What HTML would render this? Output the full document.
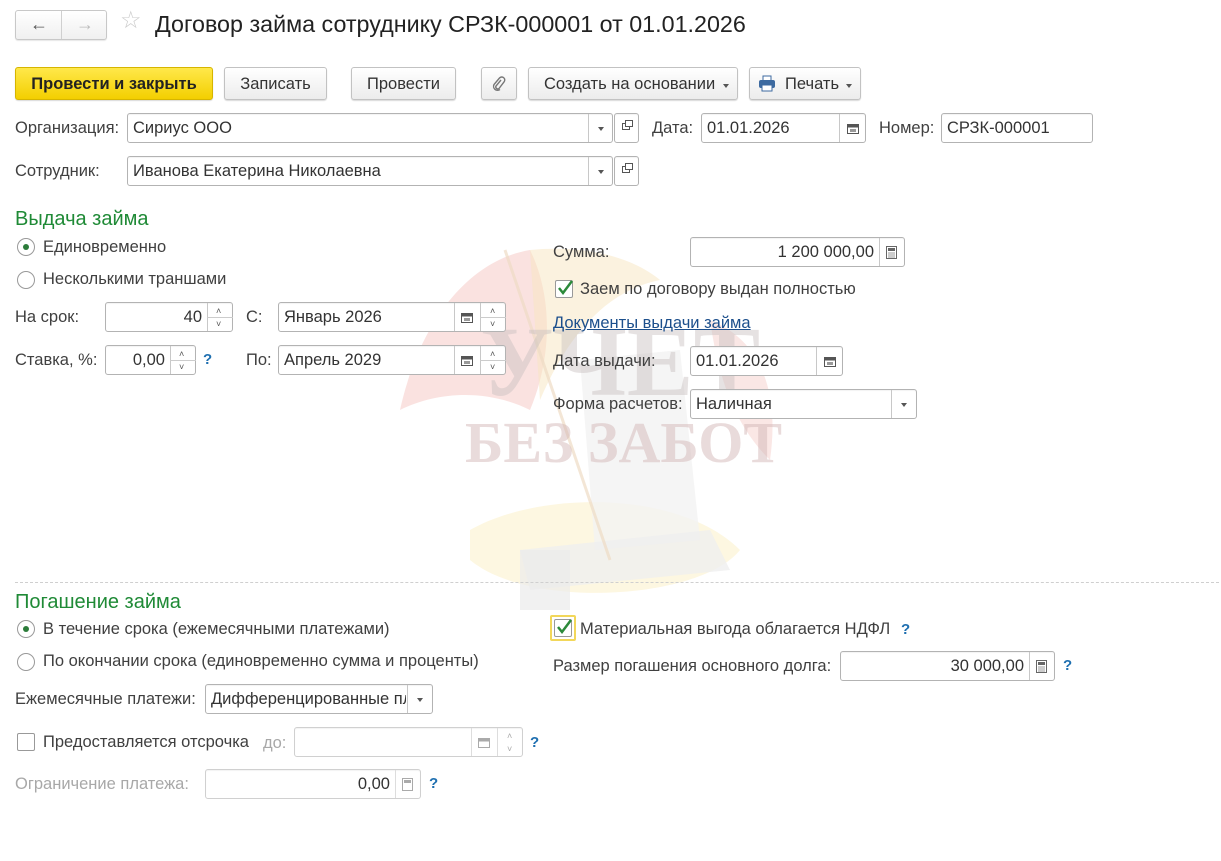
<!DOCTYPE html>
<html><head><meta charset="utf-8">
<style>
*{box-sizing:border-box;margin:0;padding:0}
body{width:1221px;height:861px;background:#fff;font-family:"Liberation Sans",Arial,sans-serif;font-size:16.5px;color:#404040;position:relative;overflow:hidden}
.a{position:absolute}
.t{position:absolute;white-space:nowrap;line-height:18px}
.inp{position:absolute;border:1px solid #b3b3b3;border-radius:3px;background:#fff;box-shadow:inset 0 1px 1px rgba(0,0,0,.05)}
.inp .v{position:absolute;top:0;left:5px;color:#333;white-space:nowrap;line-height:28px}
.inp .r{position:absolute;top:0;right:5px;color:#333;line-height:28px}
.sep{position:absolute;top:0;bottom:0;border-left:1px solid #c8c8c8}
.btn{position:absolute;border:1px solid #c2c2c2;border-radius:3px;background:linear-gradient(#fff,#ececec);box-shadow:0 1px 1px rgba(0,0,0,.15);text-align:center;line-height:32px;color:#333;white-space:nowrap}
.dd{position:absolute;width:0;height:0;border-left:3px solid transparent;border-right:3px solid transparent;border-top:4px solid #555}
.radio{position:absolute;width:18px;height:18px;border:1px solid #999;border-radius:50%;background:#fff}
.radio.on:after{content:"";position:absolute;left:5px;top:5px;width:6px;height:6px;border-radius:50%;background:#2c7c3a}
.chk{position:absolute;width:18px;height:18px;border:1px solid #999;border-radius:2px;background:#fff}
.q{position:absolute;color:#1e6fb0;font-weight:bold;font-size:15px}
.green{position:absolute;color:#1f8a36;font-size:20px;white-space:nowrap}
.gray{color:#a8a8a8}
.sp{position:absolute;font-size:9px;color:#555;line-height:10px}
</style></head><body>

<!-- watermark -->
<svg class="a" style="left:380px;top:230px" width="460" height="380" viewBox="0 0 460 380">
 <path d="M20 180 C40 90 90 30 150 20 C170 60 175 120 150 180 C110 160 60 160 20 180Z" fill="#f6cfcc" opacity=".6"/>
 <path d="M150 20 C200 15 250 25 280 50 C230 60 190 100 160 170Z" fill="#f8e6c0" opacity=".5"/>
 <path d="M330 90 C380 110 400 160 390 230 C360 200 340 160 330 90Z" fill="#f6cfcc" opacity=".5"/>
 <path d="M90 300 C160 260 300 260 360 320 C320 370 150 380 90 330Z" fill="#fcf0c8" opacity=".55"/>
 <path d="M200 130 L300 120 L320 310 L215 320Z" fill="#f2f2f2" opacity=".8"/>
 <path d="M140 320 L330 300 L350 340 L150 360Z" fill="#efefef" opacity=".8"/>
 <rect x="140" y="320" width="50" height="60" fill="#ebebeb" opacity=".7"/>
 <line x1="125" y1="20" x2="230" y2="330" stroke="#efdcc5" stroke-width="3" opacity=".7"/>
 <text x="100" y="165" font-family="Liberation Serif,serif" font-size="100" font-weight="bold" fill="#c8c0c0" opacity=".45">УЧЕТ</text>
 <text x="85" y="232" font-family="Liberation Serif,serif" font-size="58" font-weight="bold" fill="#d4b8b8" opacity=".5">БЕЗ ЗАБОТ</text>
</svg>

<!-- header -->
<div class="a" style="left:15px;top:10px;width:92px;height:30px;border:1px solid #c8c8c8;border-radius:3px;background:linear-gradient(#fff,#f0f0f0);box-shadow:0 1px 1px rgba(0,0,0,.1)"></div>
<div class="a" style="left:61px;top:11px;height:28px;border-left:1px solid #d0d0d0"></div>
<div class="t" style="left:30px;top:15px;font-size:18px;color:#555;font-weight:bold">&#8592;</div>
<div class="t" style="left:76px;top:15px;font-size:18px;color:#bbb;font-weight:bold">&#8594;</div>
<div class="t" style="left:120px;top:12px;font-size:24px;color:#ccc">☆</div>
<div class="t" style="left:155px;top:10px;font-size:23.3px;line-height:28px;color:#222">Договор займа сотруднику СРЗК-000001 от 01.01.2026</div>

<!-- toolbar -->
<div class="btn" style="left:15px;top:67px;width:198px;height:33px;background:linear-gradient(#ffe84a,#f3cf00);border-color:#d6b500;font-weight:bold;color:#222">Провести и закрыть</div>
<div class="btn" style="left:224px;top:67px;width:103px;height:33px">Записать</div>
<div class="btn" style="left:351px;top:67px;width:105px;height:33px">Провести</div>
<div class="btn" style="left:481px;top:67px;width:36px;height:33px;color:#777">
 <svg width="14" height="16" viewBox="0 0 14 16" style="margin-top:8px"><path d="M9 4 L4 10 a2 2 0 0 0 3 2.5 L12 6 a3 3 0 0 0 -4.5 -4 L2 8.5 a4 4 0 0 0 6 5" fill="none" stroke="#777" stroke-width="1.4"/></svg></div>
<div class="btn" style="left:528px;top:67px;width:210px;height:33px;text-align:left;padding-left:15px">Создать на основании</div>
<div class="dd" style="left:723px;top:84px"></div>
<div class="btn" style="left:749px;top:67px;width:112px;height:33px;text-align:left;padding-left:35px">Печать</div>
<svg class="a" style="left:758px;top:75px" width="18" height="17" viewBox="0 0 18 17"><rect x="5" y="1" width="8" height="5" fill="#fff" stroke="#3d6aa0"/><rect x="1" y="5" width="16" height="8" rx="2" fill="#3d6aa0"/><rect x="4" y="10" width="10" height="6" fill="#fff" stroke="#3d6aa0"/></svg>
<div class="dd" style="left:846px;top:84px"></div>

<!-- org row -->
<div class="t" style="left:15px;top:119px">Организация:</div>
<div class="inp" style="left:127px;top:113px;width:486px;height:30px"><div class="v">Сириус ООО</div><div class="sep" style="left:460px"></div><div class="dd" style="left:470px;top:13px"></div></div>
<div class="inp" style="left:614px;top:113px;width:25px;height:30px"><div class="a" style="left:7px;top:9px;width:8px;height:7px;border:1px solid #555"></div><div class="a" style="left:10px;top:6px;width:8px;height:7px;border:1px solid #555;background:#fff"></div></div>
<div class="t" style="left:652px;top:119px">Дата:</div>
<div class="inp" style="left:701px;top:113px;width:165px;height:30px"><div class="v">01.01.2026</div><div class="sep" style="left:137px"></div>
 <svg class="a" style="left:145px;top:9px" width="12" height="11"><rect x=".5" y="1.5" width="11" height="9" fill="#fff" stroke="#555"/><rect x=".5" y="1.5" width="11" height="3" fill="#555"/><rect x="3" y="6" width="6" height="3" fill="#999"/></svg></div>
<div class="t" style="left:879px;top:119px">Номер:</div>
<div class="inp" style="left:941px;top:113px;width:152px;height:30px"><div class="v">СРЗК-000001</div></div>

<div class="t" style="left:15px;top:162px">Сотрудник:</div>
<div class="inp" style="left:127px;top:156px;width:486px;height:30px"><div class="v">Иванова Екатерина Николаевна</div><div class="sep" style="left:460px"></div><div class="dd" style="left:470px;top:13px"></div></div>
<div class="inp" style="left:614px;top:156px;width:25px;height:30px"><div class="a" style="left:7px;top:9px;width:8px;height:7px;border:1px solid #555"></div><div class="a" style="left:10px;top:6px;width:8px;height:7px;border:1px solid #555;background:#fff"></div></div>

<!-- Выдача -->
<div class="green" style="left:15px;top:208px">Выдача займа</div>
<div class="radio on" style="left:17px;top:238px"></div><div class="t" style="left:43px;top:238px">Единовременно</div>
<div class="radio" style="left:17px;top:271px"></div><div class="t" style="left:43px;top:270px">Несколькими траншами</div>

<div class="t" style="left:15px;top:308px">На срок:</div>
<div class="inp" style="left:105px;top:302px;width:128px;height:30px"><div class="r" style="right:30px">40</div><div class="sep" style="left:101px"></div><div class="a" style="left:101px;top:14px;width:26px;border-top:1px solid #ccc"></div><div class="sp" style="left:110px;top:3px">˄</div><div class="sp" style="left:110px;top:16px">˅</div></div>
<div class="t" style="left:246px;top:308px">С:</div>
<div class="inp" style="left:278px;top:302px;width:228px;height:30px"><div class="v">Январь 2026</div><div class="sep" style="left:175px"></div><div class="sep" style="left:201px"></div><div class="a" style="left:201px;top:14px;width:26px;border-top:1px solid #ccc"></div>
 <svg class="a" style="left:182px;top:9px" width="12" height="11"><rect x=".5" y="1.5" width="11" height="9" fill="#fff" stroke="#555"/><rect x=".5" y="1.5" width="11" height="3" fill="#555"/><rect x="3" y="6" width="6" height="3" fill="#999"/></svg><div class="sp" style="left:211px;top:3px">˄</div><div class="sp" style="left:211px;top:16px">˅</div></div>

<div class="t" style="left:15px;top:351px">Ставка, %:</div>
<div class="inp" style="left:105px;top:345px;width:91px;height:30px"><div class="r" style="right:30px">0,00</div><div class="sep" style="left:64px"></div><div class="a" style="left:64px;top:14px;width:26px;border-top:1px solid #ccc"></div><div class="sp" style="left:73px;top:3px">˄</div><div class="sp" style="left:73px;top:16px">˅</div></div>
<div class="q" style="left:203px;top:351px">?</div>
<div class="t" style="left:246px;top:351px">По:</div>
<div class="inp" style="left:278px;top:345px;width:228px;height:30px"><div class="v">Апрель 2029</div><div class="sep" style="left:175px"></div><div class="sep" style="left:201px"></div><div class="a" style="left:201px;top:14px;width:26px;border-top:1px solid #ccc"></div>
 <svg class="a" style="left:182px;top:9px" width="12" height="11"><rect x=".5" y="1.5" width="11" height="9" fill="#fff" stroke="#555"/><rect x=".5" y="1.5" width="11" height="3" fill="#555"/><rect x="3" y="6" width="6" height="3" fill="#999"/></svg><div class="sp" style="left:211px;top:3px">˄</div><div class="sp" style="left:211px;top:16px">˅</div></div>

<div class="t" style="left:553px;top:243px">Сумма:</div>
<div class="inp" style="left:690px;top:237px;width:215px;height:30px"><div class="r" style="right:30px">1 200 000,00</div><div class="sep" style="left:188px"></div>
 <svg class="a" style="left:195px;top:8px" width="11" height="13"><rect x=".5" y=".5" width="10" height="12" fill="#fff" stroke="#666"/><rect x="2" y="2" width="7" height="3" fill="#666"/><path d="M2 7h7M2 9h7M2 11h7" stroke="#999"/></svg></div>
<div class="chk" style="left:555px;top:280px"></div>
<svg class="a" style="left:556px;top:279px" width="18" height="18"><path d="M3 9 L7 14 L16 2" fill="none" stroke="#2c8a3a" stroke-width="2.5"/></svg>
<div class="t" style="left:580px;top:280px">Заем по договору выдан полностью</div>
<div class="t" style="left:553px;top:314px;color:#1c4f8c;text-decoration:underline">Документы выдачи займа</div>
<div class="t" style="left:553px;top:352px">Дата выдачи:</div>
<div class="inp" style="left:690px;top:346px;width:153px;height:30px"><div class="v">01.01.2026</div><div class="sep" style="left:125px"></div>
 <svg class="a" style="left:133px;top:9px" width="12" height="11"><rect x=".5" y="1.5" width="11" height="9" fill="#fff" stroke="#555"/><rect x=".5" y="1.5" width="11" height="3" fill="#555"/><rect x="3" y="6" width="6" height="3" fill="#999"/></svg></div>
<div class="t" style="left:553px;top:395px">Форма расчетов:</div>
<div class="inp" style="left:690px;top:389px;width:227px;height:30px"><div class="v">Наличная</div><div class="sep" style="left:200px"></div><div class="dd" style="left:210px;top:13px"></div></div>

<div class="a" style="left:15px;top:582px;width:1204px;border-top:1px dashed #cfcfcf"></div>

<!-- Погашение -->
<div class="green" style="left:15px;top:591px">Погашение займа</div>
<div class="radio on" style="left:17px;top:620px"></div><div class="t" style="left:43px;top:620px">В течение срока (ежемесячными платежами)</div>
<div class="radio" style="left:17px;top:653px"></div><div class="t" style="left:43px;top:652px">По окончании срока (единовременно сумма и проценты)</div>
<div class="t" style="left:15px;top:690px">Ежемесячные платежи:</div>
<div class="inp" style="left:205px;top:684px;width:228px;height:30px;overflow:hidden"><div class="v" style="width:195px;overflow:hidden">Дифференцированные платежи</div><div class="sep" style="left:201px"></div><div class="dd" style="left:211px;top:13px"></div></div>
<div class="chk" style="left:17px;top:733px"></div>
<div class="t" style="left:43px;top:733px">Предоставляется отсрочка</div>
<div class="t gray" style="left:263px;top:734px">до:</div>
<div class="inp" style="left:294px;top:727px;width:229px;height:30px;border-color:#d0d0d0"><div class="sep" style="left:176px;border-color:#ddd"></div><div class="sep" style="left:202px;border-color:#ddd"></div>
 <svg class="a" style="left:183px;top:9px" width="12" height="11"><rect x=".5" y="1.5" width="11" height="9" fill="#fff" stroke="#aaa"/><rect x=".5" y="1.5" width="11" height="3" fill="#aaa"/></svg><div class="sp" style="left:212px;top:3px;color:#aaa">˄</div><div class="sp" style="left:212px;top:16px;color:#aaa">˅</div></div>
<div class="q" style="left:530px;top:734px">?</div>
<div class="t gray" style="left:15px;top:775px">Ограничение платежа:</div>
<div class="inp" style="left:205px;top:769px;width:216px;height:30px;border-color:#d0d0d0"><div class="r gray" style="right:30px">0,00</div><div class="sep" style="left:189px;border-color:#ddd"></div>
 <svg class="a" style="left:196px;top:8px" width="11" height="13"><rect x=".5" y=".5" width="10" height="12" fill="#fff" stroke="#aaa"/><rect x="2" y="2" width="7" height="3" fill="#aaa"/></svg></div>
<div class="q" style="left:429px;top:775px">?</div>

<div class="a" style="left:550px;top:615px;width:26px;height:26px;border:2px solid #f2d75a;border-radius:2px"></div>
<div class="chk" style="left:554px;top:619px"></div>
<svg class="a" style="left:555px;top:618px" width="18" height="18"><path d="M3 9 L7 14 L16 2" fill="none" stroke="#2c8a3a" stroke-width="2.5"/></svg>
<div class="t" style="left:580px;top:620px">Материальная выгода облагается НДФЛ</div>
<div class="q" style="left:901px;top:621px">?</div>
<div class="t" style="left:553px;top:657px">Размер погашения основного долга:</div>
<div class="inp" style="left:840px;top:651px;width:215px;height:30px"><div class="r" style="right:30px">30 000,00</div><div class="sep" style="left:188px"></div>
 <svg class="a" style="left:195px;top:8px" width="11" height="13"><rect x=".5" y=".5" width="10" height="12" fill="#fff" stroke="#666"/><rect x="2" y="2" width="7" height="3" fill="#666"/><path d="M2 7h7M2 9h7M2 11h7" stroke="#999"/></svg></div>
<div class="q" style="left:1063px;top:657px">?</div>

</body></html>
